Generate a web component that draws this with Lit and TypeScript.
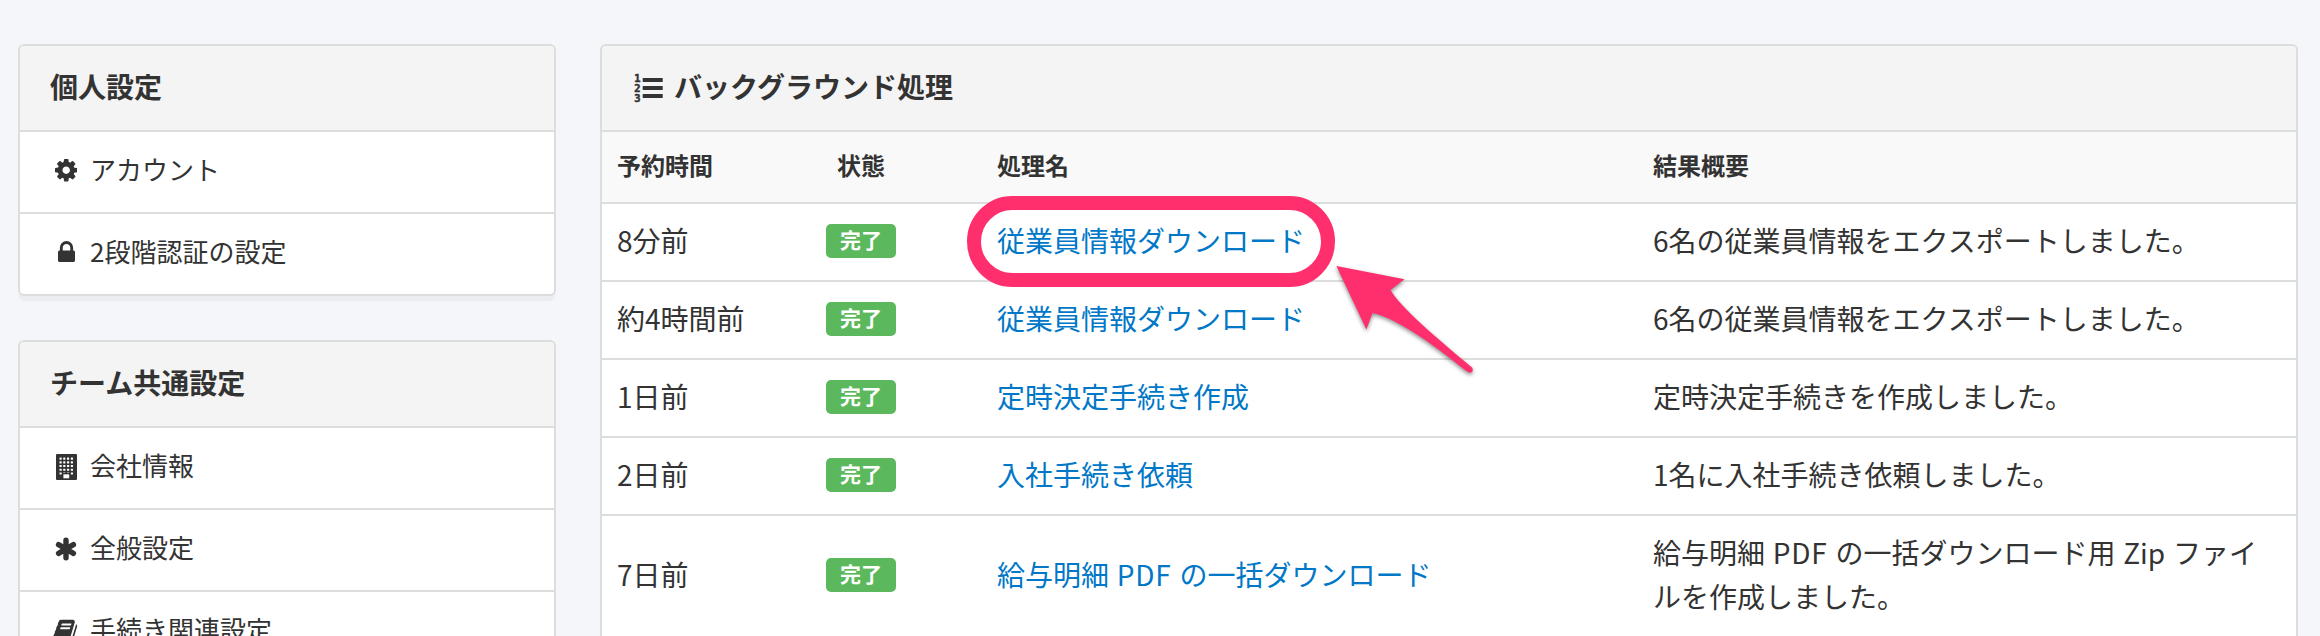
import { LitElement, html, svg, css } from "lit";
import { customElement, property } from "lit/decorators.js";

const icons: Record<string, unknown> = {
  cog: svg`<svg width="22.4" height="22.4" viewBox="0 -128 1536 1536"><path fill="currentColor" fill-rule="evenodd" d="M1024 640q0 106-75 181t-181 75-181-75-75-181 75-181 181-75 181 75 75 181zM1536 531v222q0 12-8 23t-20 13l-185 28q-19 54-39 91 35 50 107 138 10 12 10 25t-9 23q-27 37-99 108t-94 71q-12 0-26-9l-138-108q-44 23-91 38-16 136-29 186-7 28-36 28h-222q-14 0-24.500-8.500t-11.500-21.500l-28-184q-49-16-90-37l-141 107q-10 9-25 9-14 0-25-11-126-114-165-168-7-10-7-23 0-12 8-23 15-21 51-66.500t54-70.500q-27-50-41-99l-183-27q-13-2-21-12.500t-8-23.500v-222q0-12 8-23t19-13l186-28q14-46 39-92-40-57-107-138-10-12-10-24 0-10 9-23 26-36 98.500-107.500t94.500-71.500q13 0 26 10l138 107q44-23 91-38 16-136 29-186 7-28 36-28h222q14 0 24.500 8.500t11.500 21.500l28 184q49 16 90 37l142-107q9-9 24-9 13 0 25 10 129 119 165 170 7 8 7 22 0 12-8 23-15 21-51 66.500t-54 70.500q26 50 41 98l183 28q13 2 21 12.500t8 23.500z"/></svg>`,
  lock: svg`<svg width="17" height="21" viewBox="0 128 1152 1408"><path fill="currentColor" fill-rule="evenodd" d="M320 768h512v-192q0-106-75-181t-181-75-181 75-75 181v192zm832 96v576q0 40-28 68t-68 28h-960q-40 0-68-28t-28-68v-576q0-40 28-68t68-28h32v-192q0-184 132-316t316-132 316 132 132 316v192h32q40 0 68 28t28 68z"/></svg>`,
  building: svg`<svg width="21" height="26" viewBox="0 0 21 26"><rect width="21" height="26" rx="1" fill="currentColor"/>${[3.5, 7.2, 11, 14.8].map((x) =>
    [3.6, 7.3, 11, 14.7, 18.4].map((y) => svg`<rect x=${x} y=${y} width="2.2" height="2.1" rx=".4" fill="#fff"/>`)
  )}<rect x="6.400" y="19" width="8" height="5" fill="currentColor"/><rect x="7.400" y="20.300" width="5.800" height="4" fill="#fff"/></svg>`,
  asterisk: svg`<svg width="22" height="24" viewBox="-11 -12 22 24"><g stroke="currentColor" stroke-width="5.400" stroke-linecap="round"><path d="M0-8.700V8.700M-7.400-4.300L7.400 4.300M-7.400 4.300L7.400-4.300"/></g></svg>`,
  book: svg`<svg width="26" height="26" viewBox="0 0 1792 1792"><path fill="currentColor" d="M1639 478q40 57 18 129l-275 906q-19 64-76.500 107.500t-122.500 43.500h-923q-77 0-148.500-53.500t-99.500-131.500q-24-67-2-127 0-4 3-27t4-37q1-8-3-21.500t-3-19.500q2-11 8-21t16.500-23.500 16.500-23.500q23-38 45-91.500t30-91.500q3-10 .5-30t-.5-28q3-11 17-28t17-23q21-36 42-92t25-90q1-9-2.500-32t.5-28q4-13 22-30.500t22-22.500q19-26 42.500-84.500t27.500-96.500q1-8-3-25.500t-2-26.500q2-8 9-18t18-23 17-21q8-12 16.500-30.500t15-35 16-36 19.500-32 26.500-23.500 36-11.500 47.500 5.500l-1 3q38-9 51-9h761q74 0 114 56t18 130l-274 906q-36 119-71.500 153.500t-128.500 34.500h-869q-27 0-38 15-11 16-1 43 24 70 144 70h923q29 0 56-15.500t35-41.500l300-987q7-22 5-57 38 15 59 43zm-1064 2q-4 13 2 22.500t20 9.500h608q13 0 25.500-9.500t16.500-22.500l21-64q4-13-2-22.500t-20-9.500h-608q-13 0-25.500 9.500t-16.500 22.500zm-83 256q-4 13 2 22.500t20 9.500h608q13 0 25.500-9.500t16.500-22.500l21-64q4-13-2-22.500t-20-9.500h-608q-13 0-25.500 9.500t-16.500 22.500z"/></svg>`,
};

@customElement("side-panel")
class SidePanel extends LitElement {
  @property() heading = "";
  @property({ attribute: false }) items: [string, string][] = [];
  static styles = css`
    :host {
      display: block;
      border: 2px solid #dcdddd;
      border-radius: 6px;
      background: #fff;
      box-shadow: 0 6px 1px -1px #ecedf1;
      overflow: hidden;
    }
    .heading {
      height: 84px;
      line-height: 80px;
      padding: 0 30px;
      background: #f4f4f4;
      font-size: 28px;
      font-weight: 700;
    }
    .item {
      display: flex;
      align-items: center;
      height: 80px;
      padding: 0 30px;
      border-top: 2px solid #dcdddd;
      font-size: 26px;
    }
    .icon {
      display: flex;
      justify-content: center;
      width: 32px;
      margin-right: 8px;
      padding-bottom: 3px;
    }
    .icon.lock {
      padding-bottom: 5px;
    }
    .label {
      line-height: 40px;
      padding-bottom: 7px;
    }
  `;
  render() {
    return html`<div class="heading">${this.heading}</div>
      ${this.items.map(
        ([icon, label]) => html`<div class="item"><span class="icon ${icon}">${icons[icon]}</span><span class="label">${label}</span></div>`
      )}`;
  }
}

const personal = [["cog", "アカウント"], ["lock", "2段階認証の設定"]];
const team = [["building", "会社情報"], ["asterisk", "全般設定"], ["book", "手続き関連設定"]];
const pdf = html`<span class="latin">PDF</span>`;
const jobs: [string, unknown, unknown][] = [
  ["8分前", "従業員情報ダウンロード", "6名の従業員情報をエクスポートしました。"],
  ["約4時間前", "従業員情報ダウンロード", "6名の従業員情報をエクスポートしました。"],
  ["1日前", "定時決定手続き作成", "定時決定手続きを作成しました。"],
  ["2日前", "入社手続き依頼", "1名に入社手続き依頼しました。"],
  ["7日前", html`給与明細 ${pdf} の一括ダウンロード`, html`給与明細 ${pdf} の一括ダウンロード用 Zip ファイルを作成しました。`],
];

@customElement("app-root")
class AppRoot extends LitElement {
  static styles = css`
    :host {
      display: block;
      position: relative;
      box-sizing: border-box;
      height: 636px;
      overflow: hidden;
      background: #f5f6fa;
      color: #333;
      font-family: "Noto Sans CJK JP", sans-serif;
    }
    .layout {
      display: grid;
      grid-template-columns: 538px 1698px;
      column-gap: 44px;
      align-items: start;
      padding: 44px 22px 0 18px;
    }
    .sidebar {
      display: grid;
      gap: 44px;
    }
    .main {
      border: 2px solid #dcdddd;
      border-radius: 6px 6px 0 0;
      background: #fff;
      overflow: hidden;
    }
    .title {
      display: flex;
      align-items: center;
      gap: 9px;
      height: 84px;
      padding: 0 32px;
      background: #f4f4f4;
      font-size: 28px;
      font-weight: 700;
    }
    .title span {
      line-height: 40px;
      padding-bottom: 4px;
    }
    .row {
      display: grid;
      grid-template-columns: 209px 171px 656px 1fr;
      align-items: center;
      padding: 14px 20px 18px 15px;
      border-top: 2px solid #dcdddd;
      font-size: 28px;
      line-height: 44px;
      word-spacing: 1.5px;
    }
    .latin {
      letter-spacing: 0.8px;
    }
    .head {
      padding-top: 11px;
      padding-bottom: 15px;
      background: #f9f9f9;
      font-size: 24px;
      font-weight: 700;
    }
    .status {
      width: 70px;
      text-align: center;
    }
    .badge {
      height: 34px;
      margin-top: 2px;
      border-radius: 5px;
      background: #5cb85c;
      color: #fff;
      font-size: 21px;
      font-weight: 700;
      line-height: 30px;
    }
    .link {
      color: #0077c7;
      text-decoration: none;
    }
    .ring {
      position: absolute;
      left: 967px;
      top: 196px;
      width: 368px;
      height: 91px;
      box-sizing: border-box;
      border: 14px solid #ff2f6e;
      border-radius: 46px;
    }
    .arrow {
      position: absolute;
      left: 1326px;
      top: 256px;
      filter: drop-shadow(0 2px 2px rgba(0, 0, 0, 0.45));
    }
  `;
  render() {
    return html`
      <div class="layout">
        <div class="sidebar">
          <side-panel heading="個人設定" .items=${personal}></side-panel>
          <side-panel heading="チーム共通設定" .items=${team}></side-panel>
        </div>
        <div class="main">
          <div class="title">
            <svg width="31" height="30" viewBox="0 0 31 30" fill="currentColor" font-family="DejaVu Sans Mono" font-size="10.500" font-weight="700">
              <g stroke="currentColor" stroke-width=".5"><text x=".3" y="9">1</text><text x=".3" y="19">2</text><text x=".3" y="28.600">3</text></g>
              <rect x="8.700" y="5" width="20" height="4" /><rect x="8.700" y="13" width="20" height="4" /><rect x="8.700" y="21" width="20" height="4" />
            </svg>
            <span>バックグラウンド処理</span>
          </div>
          <div class="row head">
            <div>予約時間</div><div class="status">状態</div><div>処理名</div><div>結果概要</div>
          </div>
          ${jobs.map(
            ([time, name, result]) => html`<div class="row">
              <div>${time}</div>
              <div class="status badge">完了</div>
              <div><a class="link">${name}</a></div>
              <div>${result}</div>
            </div>`
          )}
        </div>
      </div>
      <div class="ring"></div>
      <svg class="arrow" width="160" height="130" viewBox="1326 256 160 130">
        <path fill="#ff2f6e" d="M1336.400 266L1404.500 279.300L1390.500 290C1400 307 1438 339 1472 367.500Q1474 371 1471 372.500Q1469.500 373 1467 371.500C1438 349 1402 320 1372.500 313L1366.400 329.500Z" />
      </svg>
    `;
  }
}
